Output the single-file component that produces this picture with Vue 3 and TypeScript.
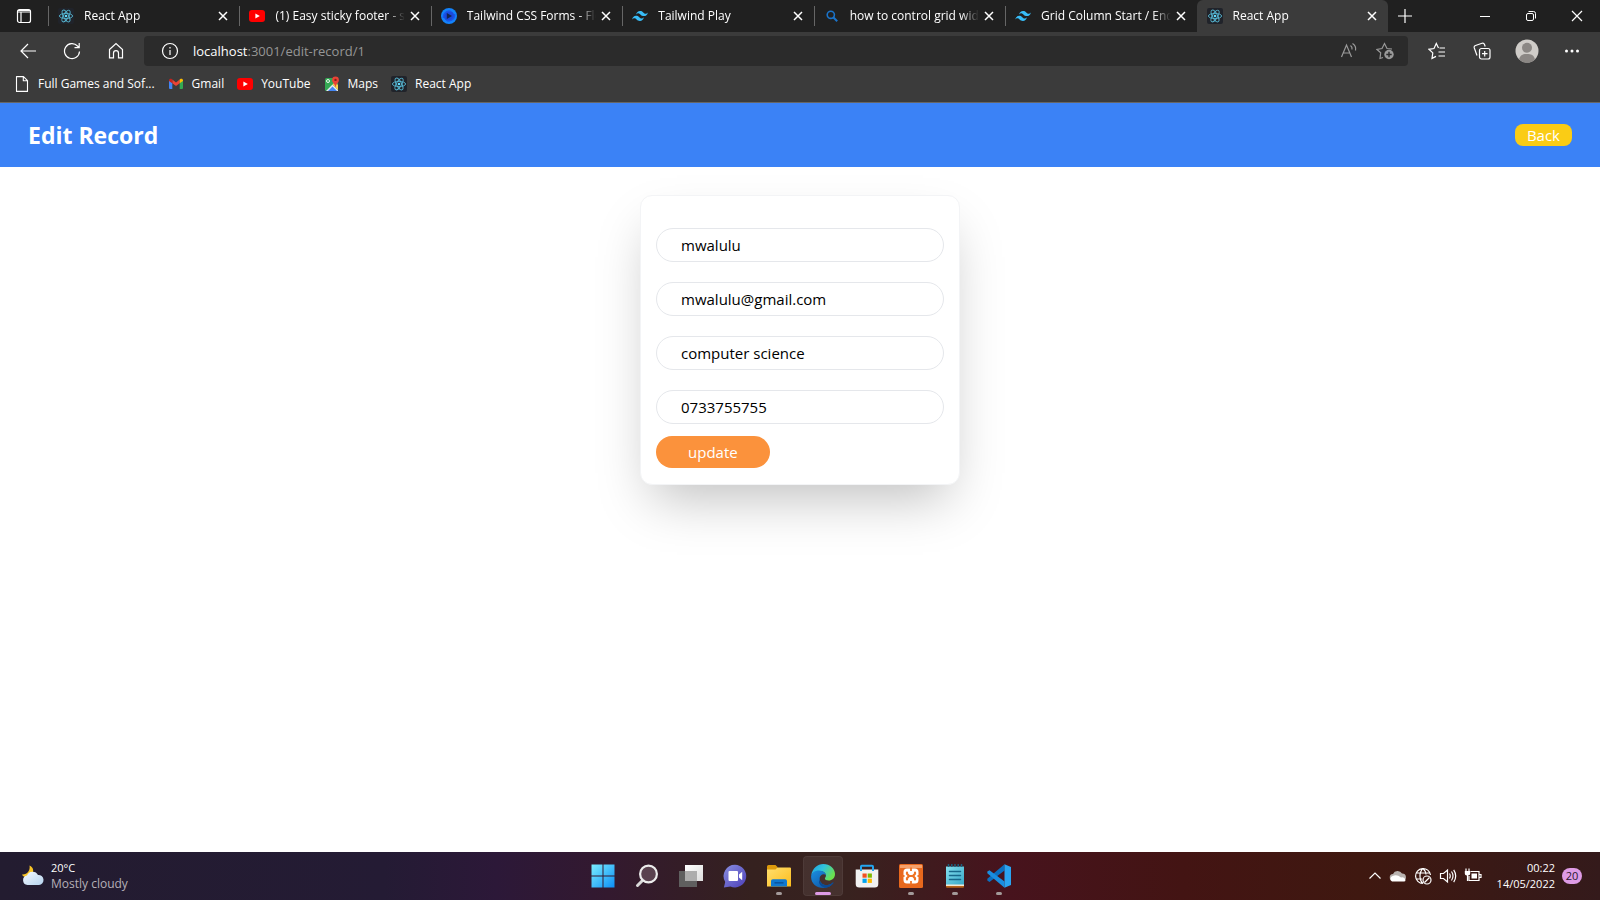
<script setup lang="ts">
import { ref } from 'vue'

interface Tab {
  title: string
  icon: string
  active?: boolean
}
interface Bookmark {
  label: string
  icon: string
}
interface TaskApp {
  label: string
  icon: string
  state?: 'running' | 'focused'
}
interface Field {
  id: string
  label: string
  type: string
  value: string
}

const tabs: Tab[] = [
  { title: 'React App', icon: 'react' },
  { title: '(1) Easy sticky footer - st', icon: 'youtube' },
  { title: 'Tailwind CSS Forms - Flo', icon: 'flowbite' },
  { title: 'Tailwind Play', icon: 'tailwind' },
  { title: 'how to control grid widt', icon: 'search' },
  { title: 'Grid Column Start / End', icon: 'tailwind' },
  { title: 'React App', icon: 'react', active: true },
]

const bookmarks: Bookmark[] = [
  { label: 'Full Games and Sof...', icon: 'file' },
  { label: 'Gmail', icon: 'gmail' },
  { label: 'YouTube', icon: 'youtube' },
  { label: 'Maps', icon: 'maps' },
  { label: 'React App', icon: 'react' },
]

const apps: TaskApp[] = [
  { label: 'Start', icon: 'start' },
  { label: 'Search', icon: 'lens' },
  { label: 'Task view', icon: 'taskview' },
  { label: 'Chat', icon: 'chat' },
  { label: 'File Explorer', icon: 'explorer', state: 'running' },
  { label: 'Microsoft Edge', icon: 'edge', state: 'focused' },
  { label: 'Microsoft Store', icon: 'store' },
  { label: 'XAMPP', icon: 'xampp', state: 'running' },
  { label: 'Notepad', icon: 'notepad', state: 'running' },
  { label: 'Visual Studio Code', icon: 'vscode', state: 'running' },
]

const fields = ref<Field[]>([
  { id: 'name', label: 'Name', type: 'text', value: 'mwalulu' },
  { id: 'email', label: 'Email', type: 'email', value: 'mwalulu@gmail.com' },
  { id: 'course', label: 'Course', type: 'text', value: 'computer science' },
  { id: 'phone', label: 'Phone', type: 'tel', value: '0733755755' },
])
</script>

<template>
  <div class="screen">
    <svg class="sprite" aria-hidden="true">
      <defs>
        <linearGradient id="g-win" gradientUnits="userSpaceOnUse" x1="0" y1="0" x2="24" y2="24">
          <stop offset="0" stop-color="#7df0ff" />
          <stop offset="1" stop-color="#0a8cf5" />
        </linearGradient>
        <linearGradient id="g-chat" x1="0" y1="0" x2="1" y2="1">
          <stop offset="0" stop-color="#8a8fe0" />
          <stop offset="1" stop-color="#4c3fb8" />
        </linearGradient>
        <linearGradient id="g-folder" x1="0" y1="0" x2="1" y2="1">
          <stop offset="0" stop-color="#ffdf6e" />
          <stop offset="1" stop-color="#fcbc1c" />
        </linearGradient>
        <linearGradient id="g-edge-top" x1="0" y1="0" x2="1" y2="0.5">
          <stop offset="0" stop-color="#1f9fe0" />
          <stop offset="0.5" stop-color="#30c4dc" />
          <stop offset="1" stop-color="#6be04e" />
        </linearGradient>
        <linearGradient id="g-edge-low" x1="0" y1="0" x2="1" y2="1">
          <stop offset="0" stop-color="#1b8fe0" />
          <stop offset="1" stop-color="#0c4c9c" />
        </linearGradient>
        <linearGradient id="g-note" x1="0" y1="0" x2="1" y2="1">
          <stop offset="0" stop-color="#86e0ef" />
          <stop offset="1" stop-color="#38a9c8" />
        </linearGradient>
        <linearGradient id="g-cloud" x1="0" y1="0" x2="1" y2="1">
          <stop offset="0" stop-color="#f5faff" />
          <stop offset="1" stop-color="#b5d3ee" />
        </linearGradient>
        <linearGradient id="g-view" x1="0" y1="0" x2="1" y2="1">
          <stop offset="0" stop-color="#ffffff" />
          <stop offset="1" stop-color="#dcdcdc" />
        </linearGradient>
      </defs>

      <symbol id="i-react" viewBox="0 0 16 16">
        <rect width="16" height="16" rx="2" fill="#20232a" />
        <g fill="none" stroke="#55b4cf" stroke-width="0.9">
          <ellipse cx="8" cy="8" rx="6.6" ry="2.6" />
          <ellipse cx="8" cy="8" rx="6.6" ry="2.6" transform="rotate(60 8 8)" />
          <ellipse cx="8" cy="8" rx="6.6" ry="2.6" transform="rotate(120 8 8)" />
        </g>
        <circle cx="8" cy="8" r="1.3" fill="#61dafb" />
      </symbol>
      <symbol id="i-youtube" viewBox="0 0 16 16">
        <rect y="2" width="16" height="12" rx="3" fill="#f00" />
        <path d="M6.4 5.4v5.2L10.8 8z" fill="#fff" />
      </symbol>
      <symbol id="i-flowbite" viewBox="0 0 16 16">
        <circle cx="8" cy="8" r="8" fill="#1383fb" />
        <circle cx="8" cy="8" r="5.2" fill="#1b49dc" />
        <path d="M2.500 10C2 5 6 2.500 10 3.500M13.500 6c.5 5-3.500 7.500-7.500 6.500" fill="none" stroke="#1a56e8" stroke-width="1.500" />
        <path d="M5.800 5v6L11 8z" fill="#13234f" />
      </symbol>
      <symbol id="i-tailwind" viewBox="0 0 16 16">
        <path d="M4 6.600Q5 3 8 3c3 0 3.400 2.300 5 2.700 1 .3 1.900-.1 2.900-1.300-.7 2.500-2 3.700-4 3.700-3 0-3.400-2.300-5-2.700-1-.3-1.900.1-2.900 1.200zM.1 11.400Q1.100 7.800 4 7.800c3 0 3.400 2.300 5 2.700 1 .3 1.900-.1 2.900-1.300-.7 2.500-2 3.700-4 3.700-3 0-3.400-2.300-5-2.700-1-.2-1.800.1-2.800 1.200z" fill="#38bdf8" />
      </symbol>
      <symbol id="i-search" viewBox="0 0 16 16">
        <g fill="none" stroke="#1a73c9" stroke-width="1.600">
          <circle cx="6.800" cy="6.800" r="3.600" />
          <path d="M9.500 9.500l3.700 3.700" stroke-width="2" />
        </g>
      </symbol>
      <symbol id="i-file" viewBox="0 0 16 16">
        <path d="M2.500.6h7l4 4v10.800h-11zM9.300.8v4h4" fill="none" stroke="#fff" stroke-width="1.100" stroke-linejoin="round" />
      </symbol>
      <symbol id="i-gmail" viewBox="0 0 16 16">
        <path d="M1 4.300l3.300 2.500V13H2a1 1 0 0 1-1-1z" fill="#4285f4" />
        <path d="M15 4.300l-3.300 2.500V13H14a1 1 0 0 0 1-1z" fill="#34a853" />
        <path d="M4.300 3.600L8 6.400l3.700-2.800v3.700L8 10 4.300 7.300z" fill="#ea4335" />
        <path d="M1 4.300c0-1.600 1.700-2 2.800-1.200l.5.500v3.700L1 4.900z" fill="#c5221f" />
        <path d="M15 4.300c0-1.600-1.700-2-2.800-1.200l-.5.500v3.700L15 4.900z" fill="#fbbc04" />
      </symbol>
      <symbol id="i-maps" viewBox="0 0 16 16">
        <rect x="1" y="2" width="13" height="13" rx="1.500" fill="#34a853" />
        <path d="M2 15l6.500-6.500L14 14v1z" fill="#e8eaed" />
        <path d="M4 15l4.500-4.500L13 15z" fill="#4285f4" />
        <path d="M8.500 8.500L11 6l3 3v5z" fill="#fbd04b" />
        <circle cx="4" cy="5" r="1.500" fill="none" stroke="#fff" stroke-width="0.900" />
        <path d="M11.500.5a3.400 3.400 0 0 1 3.400 3.400c0 2.600-2.600 3.600-3.200 7h-.4c-.6-3.400-3.200-4.400-3.200-7A3.400 3.400 0 0 1 11.500.5z" fill="#ea4335" />
        <circle cx="11.500" cy="3.900" r="1.200" fill="#8c1d18" />
      </symbol>

      <symbol id="i-start" viewBox="0 0 24 24">
        <path d="M.5.500h11v11H.5zM12.500.500h11v11h-11zM.5 12.500h11v11H.5zM12.500 12.500h11v11h-11z" fill="url(#g-win)" />
      </symbol>
      <symbol id="i-lens" viewBox="0 0 24 24">
        <path d="M8 16l-5.500 5.500" stroke="#d9d9d9" stroke-width="3" stroke-linecap="round" />
        <circle cx="13.500" cy="10" r="8.400" fill="#6b5360" fill-opacity="0.700" stroke="#ececec" stroke-width="2.200" />
      </symbol>
      <symbol id="i-taskview" viewBox="0 0 24 24">
        <rect x="6" y="1" width="18" height="16" fill="url(#g-view)" />
        <rect y="7" width="18" height="16" fill="#5f5f5f" />
        <rect x="6" y="7" width="12" height="10" fill="#adadad" />
      </symbol>
      <symbol id="i-chat" viewBox="0 0 24 24">
        <path d="M12 .8A11.300 11.300 0 1 1 7.500 22.500L.9 23.400l1.300-5.500A11.300 11.300 0 0 1 12 .8z" fill="url(#g-chat)" />
        <rect x="5.500" y="7" width="9.500" height="10" rx="1" fill="#fff" />
        <path d="M16 10.500l3.200-2.700v8.400L16 13.500z" fill="#fff" />
      </symbol>
      <symbol id="i-explorer" viewBox="0 0 24 24">
        <path d="M0 2.500A1.500 1.500 0 0 1 1.500 1h7L10.500 3v4H0z" fill="#dd9a0c" />
        <path d="M0 5.500h8.500L10.500 3.500H23a1 1 0 0 1 1 1V22.500H0z" fill="url(#g-folder)" />
        <path d="M4 22.500V17a1.800 1.800 0 0 1 1.800-1.800h12.400A1.800 1.800 0 0 1 20 17v5.500z" fill="#0f78d0" />
        <path d="M7.500 18.800h9" stroke="#0a559f" stroke-width="1.600" />
      </symbol>
      <symbol id="i-edge" viewBox="0 0 24 24">
        <path d="M.3 11C1.500 4.300 6.500 0 12.300 0 19 0 24 4.600 24 10c0 4.200-3 6.500-6.300 6.500-2.500 0-3.800-.9-3.800-2 0-.8 1.100-1.200 1.100-3 0-2-2.200-4.500-6-4.500C5 7 2 8.700.3 11z" fill="url(#g-edge-top)" />
        <path d="M.1 13C.1 9 3.600 6.500 8 6.500c4.800 0 7 3 7 5-.8-1-2-1.500-3-1.300-2.300.4-3.800 2.800-3.300 5.600.7 3.700 4.300 5.800 8 5.200 2.500-.4 4.200-1.500 5.200-2.500.4-.3.800.1.500.6C20.300 22.300 16.500 24 12.500 24 5.500 24 .1 19.500.1 13z" fill="url(#g-edge-low)" />
        <path d="M8.700 15.800c.7 3.700 4.300 5.800 8 5.200 2.500-.4 4.200-1.500 5.200-2.500.4-.3.800.1.500.6-1.500 2.200-4.200 4.200-7.200 4.700-5.500-.3-8.700-4.800-6.500-8z" fill="#0b4a94" />
      </symbol>
      <symbol id="i-store" viewBox="0 0 24 24">
        <path d="M.7 5.500h22.600V20a3.500 3.500 0 0 1-3.500 3.500H4.200A3.500 3.500 0 0 1 .7 20z" fill="#f1f1f1" />
        <path d="M6 7V2.500A1 1 0 0 1 7 1.800h10a1 1 0 0 1 1 1V7" fill="none" stroke="#24a5ee" stroke-width="2" />
        <path d="M7.500 9.500h4.200v4.200H7.500z" fill="#f25022" />
        <path d="M12.700 9.500h4.200v4.200h-4.200z" fill="#7fba00" />
        <path d="M7.500 14.700h4.200v4.200H7.500z" fill="#00a4ef" />
        <path d="M12.700 14.700h4.200v4.200h-4.200z" fill="#ffb900" />
      </symbol>
      <symbol id="i-xampp" viewBox="0 0 24 24">
        <rect width="24" height="24" rx="1.500" fill="#e8681d" />
        <rect x="1" y="1" width="22" height="3" fill="#f6a06a" />
        <path d="M8 8h2.500v2.500h3V8H16M8 16h2.500v-2.500h3V16H16M8 8v3l1.500 1L8 13v3M16 8v3l-1.500 1 1.500 1v3" fill="none" stroke="#fff" stroke-width="7" stroke-linejoin="round" stroke-linecap="round" />
        <path d="M8 8.500v1.200L10 12l-2 2.300v1.200M16 8.500v1.200L14 12l2 2.300v1.200M10 12h4" fill="none" stroke="#ef7526" stroke-width="2.200" stroke-linejoin="round" stroke-linecap="round" />
        <path d="M12 3.500v3.500M12 17v3.500M3.500 12h2M18.500 12h2" stroke="#ef7526" stroke-width="1.800" />
      </symbol>
      <symbol id="i-notepad" viewBox="0 0 24 24">
        <rect x="3" y="20" width="18" height="3.800" rx="1" fill="#b8641a" />
        <rect x="3" y="19" width="18" height="3" fill="#f2ead8" />
        <path d="M3 2.500h18v18H3z" fill="url(#g-note)" />
        <path d="M5.500 0v3M8.800 0v3M12 0v3M15.200 0v3M18.500 0v3" stroke="#1c5f7c" stroke-width="1.500" />
        <path d="M6.500 7.500h11M6.500 11.500h11M6.500 15.500h11" stroke="#17688a" stroke-width="1.500" stroke-linecap="round" />
      </symbol>
      <symbol id="i-vscode" viewBox="0 0 24 24">
        <path d="M17.500.3v6.200L2.500 18 .3 16.500v-1.700z" fill="#0a6fc0" />
        <path d="M17.500 23.700v-6.200L2.500 6.200.3 7.600v1.700z" fill="#1a8ee0" />
        <path d="M17.500.3L24 3v18l-6.500 2.700z" fill="#2aa4f0" />
      </symbol>
    </svg>

    <header class="browser">
      <div class="strip">
        <button class="tab-actions" type="button" aria-label="Tab actions">
          <svg width="16" height="16" viewBox="0 0 16 16" fill="none" stroke="#fff" stroke-width="1.200">
            <rect x="1.500" y="1.500" width="13" height="13" rx="2" />
            <path d="M1.500 4h13M2 2.500h12M5 4v10" />
          </svg>
        </button>
        <div class="tabs" role="tablist">
          <div v-for="(tab, i) in tabs" :key="i" class="tab" :class="{ active: tab.active }" role="tab" :aria-selected="!!tab.active">
            <svg class="icon"><use :href="'#i-' + tab.icon" /></svg>
            <span class="tab-title">{{ tab.title }}</span>
            <button class="tab-close" type="button" aria-label="Close tab">
              <svg width="16" height="16" viewBox="0 0 16 16" fill="none" stroke="#fff" stroke-width="1.500">
                <path d="M4 4l8 8M12 4l-8 8" />
              </svg>
            </button>
          </div>
        </div>
        <button class="new-tab" type="button" aria-label="New tab">
          <svg width="16" height="16" viewBox="0 0 16 16" fill="none" stroke="#fff" stroke-width="1.200">
            <path d="M8 1v14M1 8h14" />
          </svg>
        </button>
        <div class="window-controls">
          <button type="button" aria-label="Minimise">
            <svg width="12" height="12" viewBox="0 0 12 12" stroke="#fff"><path d="M1 6.500h10" /></svg>
          </button>
          <button type="button" aria-label="Restore">
            <svg width="12" height="12" viewBox="0 0 12 12" fill="none" stroke="#fff">
              <rect x="1.500" y="3.500" width="7" height="7" rx="1.500" />
              <path d="M3.500 1.500H8.500a2 2 0 0 1 2 2V8.500" />
            </svg>
          </button>
          <button type="button" aria-label="Close">
            <svg width="12" height="12" viewBox="0 0 12 12" stroke="#fff" stroke-width="1.200"><path d="M1 1l10 10M11 1L1 11" /></svg>
          </button>
        </div>
      </div>

      <div class="toolbar">
        <nav class="nav">
          <button type="button" aria-label="Back">
            <svg width="18" height="18" viewBox="0 0 18 18"><path d="M17 9H2M9 2L2 9l7 7" /></svg>
          </button>
          <button type="button" aria-label="Refresh">
            <svg width="18" height="18" viewBox="0 0 18 18"><path d="M16.500 9.500A7.500 7.500 0 1 1 14.500 4L16 5.500M16.200 1v4.700h-4.700" /></svg>
          </button>
          <button type="button" aria-label="Home">
            <svg width="18" height="18" viewBox="0 0 18 18"><path d="M2.500 7.500L9 1.500l6.500 6v8.300h-4v-4.600a2.500 2.500 0 0 0-5 0v4.600h-4z" /></svg>
          </button>
        </nav>
        <div class="address">
          <svg width="18" height="18" viewBox="0 0 18 18"><circle cx="9" cy="9" r="7.500" /><path d="M9 8v5M9 5v1.500" /></svg>
          <span class="url"><span class="host">localhost</span>:3001/edit-record/1</span>
          <button type="button" aria-label="Read aloud">
            <svg class="dim" width="18" height="18" viewBox="0 0 18 18"><path d="M1.500 15L6.500 3l5 12M3.300 11h6.500M10.500 3.500q2 1.500 1.500 4M12.500 1.500q4 2.500 3 7" /></svg>
          </button>
          <button type="button" aria-label="Add to favourites">
            <svg class="dim" width="18" height="18" viewBox="0 0 18 18">
              <path d="M7 15.500l-3 1 .7-5.700L1 7.500l5-1L8.500 1.500l2.500 5 5 .5" />
              <circle cx="13" cy="12.500" r="4.700" fill="#9a9a9a" stroke="none" />
              <path d="M13 9.800v5.400M10.300 12.500h5.400" stroke="#2b2b2b" stroke-width="1.400" />
            </svg>
          </button>
        </div>
        <div class="tools">
          <button type="button" aria-label="Favourites">
            <svg width="18" height="18" viewBox="0 0 18 18"><path d="M10.500 6L8.300 1.500 6 6.500l-5 .8 3.800 3.600-.8 5.500 4-2M11.500 6H17M10.500 10H17M10.500 14H17" /></svg>
          </button>
          <button type="button" aria-label="Collections">
            <svg width="18" height="18" viewBox="0 0 18 18">
              <rect x="6.500" y="6.500" width="10.500" height="10.500" rx="2" />
              <path d="M11.700 9v5.500M9 11.700h5.500M4 13.500L1.300 6a2 2 0 0 1 1.200-2.500L9 1.300A2 2 0 0 1 11.500 2.500l.7 2" />
            </svg>
          </button>
          <button type="button" aria-label="Profile">
            <svg class="avatar" width="24" height="24" viewBox="0 0 24 24">
              <circle cx="12" cy="12" r="11.500" fill="#cfccc8" />
              <circle cx="12" cy="8.800" r="5" fill="#8b8784" />
              <path d="M4 20.500c1-4.500 4-5.500 8-5.500s7 1 8 5.500a11.500 11.500 0 0 1-16 0z" fill="#8b8784" />
            </svg>
          </button>
          <button type="button" aria-label="Settings and more">
            <svg class="avatar" width="18" height="18" viewBox="0 0 18 18" fill="#fff"><circle cx="3.500" cy="9" r="1.500" /><circle cx="9" cy="9" r="1.500" /><circle cx="14.500" cy="9" r="1.500" /></svg>
          </button>
        </div>
      </div>

      <nav class="bookmarks">
        <a v-for="mark in bookmarks" :key="mark.label" href="#">
          <svg class="icon"><use :href="'#i-' + mark.icon" /></svg>
          <span>{{ mark.label }}</span>
        </a>
      </nav>
    </header>

    <main class="page">
      <div class="page-header">
        <h1>Edit Record</h1>
        <a class="back" href="#">Back</a>
      </div>
      <form class="card" @submit.prevent>
        <div class="fields">
          <input v-for="field in fields" :id="field.id" :key="field.id" v-model="field.value" :type="field.type" :aria-label="field.label" />
        </div>
        <button class="update" type="submit">update</button>
      </form>
    </main>

    <footer class="taskbar">
      <div class="weather">
        <svg width="24" height="24" viewBox="0 0 24 24">
          <path d="M9.500 1.500c4 1.500 5 6.500 2 9.500S3.500 14 2 10.500c5 .5 8.500-4 7.500-9z" fill="#f7c325" />
          <path d="M7.500 21a4.800 4.800 0 0 1-.5-9.500 6 6 0 0 1 11-.5 5 5 0 0 1 1 10z" fill="url(#g-cloud)" />
        </svg>
        <div>
          <div>20°C</div>
          <div class="muted">Mostly cloudy</div>
        </div>
      </div>
      <div class="apps">
        <button v-for="app in apps" :key="app.label" type="button" class="app" :class="app.state" :aria-label="app.label">
          <svg width="24" height="24"><use :href="'#i-' + app.icon" /></svg>
        </button>
      </div>
      <div class="tray">
        <svg width="14" height="16" viewBox="0 0 14 16"><path d="M1.500 10.500L7 5l5.500 5.500" /></svg>
        <svg width="18" height="16" viewBox="0 0 18 16">
          <path d="M4.500 13a3.500 3.500 0 0 1-.5-7 5 5 0 0 1 9-.5 3.800 3.800 0 0 1 1 7.500z" fill="#b9b3b0" stroke="none" />
          <path d="M3 13.500a3 3 0 0 1 .5-5.500Q8 6 12 9.500q3.500-1 4.500 2.500a1.500 1.500 0 0 1-1.500 1.500z" fill="#fff" stroke="none" />
        </svg>
        <svg width="18" height="18" viewBox="0 0 18 18">
          <path d="M9 16.500A7.500 7.500 0 1 1 16.500 8M9 1.500c-4 3.500-4 11.500 0 15M9 1.500c2 1.800 3 4 3 6M2 6h14M2 12h6" />
          <circle cx="13" cy="13" r="4" />
          <path d="M10.500 15.500l5-5" />
        </svg>
        <svg width="18" height="18" viewBox="0 0 18 18"><path d="M1.500 6.500h3L8.500 3v12l-4-3.500h-3zM10.500 6.500q1.500 2.500 0 5M12.500 4.500q3 4.500 0 9M14.700 2.800q4 6.200 0 12.400" /></svg>
        <svg width="18" height="18" viewBox="0 0 18 18">
          <path d="M6.500 4.500H15v9H5V9M15.500 7.500h1.500v3h-1.500M2 1.500v3M5 1.500v3M3.500 8v6" />
          <path d="M.8 4h5.400v2.500a2 2 0 0 1-2 2H2.800a2 2 0 0 1-2-2zM7.500 6.500h5.500v5H7.500z" fill="#fff" stroke="none" />
        </svg>
        <div class="clock">
          <div>00:22</div>
          <div>14/05/2022</div>
        </div>
        <span class="badge">20</span>
      </div>
    </footer>
  </div>
</template>

<style>
body {
  margin: 0;
}
</style>

<style scoped>
.screen {
  display: flex;
  flex-direction: column;
  min-height: 100vh;
  background: #fff;
  font-family: "Open Sans", "Noto Sans", sans-serif;
}
.screen *,
.screen *::before,
.screen *::after {
  box-sizing: border-box;
}
.sprite {
  position: absolute;
  width: 0;
  height: 0;
}
button {
  display: flex;
  align-items: center;
  justify-content: center;
  padding: 0;
  border: 0;
  background: none;
  color: inherit;
  font: inherit;
}
a {
  color: inherit;
  text-decoration: none;
}
svg {
  display: block;
  flex: none;
}
.icon {
  width: 16px;
  height: 16px;
}

.browser {
  background: #3b3b3b;
  border-bottom: 1px solid #666;
  color: #fff;
  font-size: 12px;
  line-height: 16px;
}
.strip {
  display: flex;
  height: 32px;
  background: #202020;
}
.tab-actions {
  flex: 0 0 48px;
}
.tabs {
  display: flex;
  flex: 0 1 1340px;
  min-width: 0;
}
.tab {
  display: flex;
  flex: 1 1 0;
  align-items: center;
  gap: 10px;
  min-width: 0;
  padding: 0 8px 0 10px;
  background: linear-gradient(#666, #666) left / 1px 20px no-repeat;
}
.tab.active {
  border-radius: 6px 6px 0 0;
  background: #3b3b3b;
}
.tab-title {
  flex: 1;
  min-width: 0;
  margin-right: -8px;
  overflow: hidden;
  white-space: nowrap;
  mask-image: linear-gradient(to right, #000 calc(100% - 18px), transparent);
}
.new-tab {
  flex: 0 0 34px;
}
.window-controls {
  display: flex;
  margin-left: auto;
}
.window-controls button {
  width: 46px;
}

.toolbar {
  display: flex;
  align-items: center;
  height: 38px;
  padding-right: 6px;
}
.nav {
  display: flex;
  padding: 0 6px;
}
.nav button,
.tools button {
  width: 44px;
  height: 30px;
}
.tools button {
  width: 45px;
}
.tools {
  display: flex;
  padding-left: 6px;
}
.toolbar svg,
.tray svg {
  fill: none;
  stroke: #fff;
  stroke-width: 1.2;
}
.toolbar svg.dim {
  stroke: #9a9a9a;
}
.toolbar svg.avatar {
  fill: #fff;
  stroke: none;
}
.address {
  display: flex;
  flex: 1;
  align-items: center;
  gap: 18px;
  height: 30px;
  padding: 0 14px 0 17px;
  border-radius: 4px;
  background: #2b2b2b;
  font-size: 13px;
}
.url {
  flex: 1;
  margin-left: -4px;
  color: #969696;
}
.host {
  color: #fff;
}
.bookmarks {
  display: flex;
  align-items: center;
  gap: 13px;
  height: 32px;
  padding: 0 14px 4px;
}
.bookmarks a {
  display: flex;
  gap: 8px;
}

.page {
  display: flex;
  flex: 1;
  flex-direction: column;
  align-items: center;
}
.page-header {
  display: flex;
  align-items: center;
  justify-content: space-between;
  align-self: stretch;
  height: 64px;
  padding: 0 28px;
  background: #3b82f6;
  color: #fff;
}
h1 {
  margin: 0;
  font-size: 23px;
  line-height: 32px;
}
.back {
  padding: 0 12px;
  border-radius: 8px;
  background: #facc15;
  font-size: 15px;
  line-height: 22px;
}
.card {
  width: 320px;
  margin-top: 28px;
  padding: 32px 15px 16px;
  border: 1px solid #f3f4f6;
  border-radius: 12px;
  background: #fff;
  box-shadow: 0 25px 50px -12px rgba(0, 0, 0, 0.25);
  font-size: 15px;
}
.fields {
  display: grid;
  gap: 20px;
}
input {
  width: 100%;
  height: 34px;
  margin: 0;
  padding: 0 24px;
  border: 1px solid #e5e7eb;
  border-radius: 17px;
  outline: none;
  background: #fff;
  color: #000;
  font: inherit;
}
.update {
  height: 32px;
  margin-top: 12px;
  padding: 0 32px;
  border-radius: 16px;
  background: #fb923c;
  color: #fff;
}

.taskbar {
  display: grid;
  grid-template-columns: 1fr auto 1fr;
  align-items: center;
  height: 48px;
  padding: 0 18px 0 20px;
  background: linear-gradient(to right, #231c30 0%, #241b34 24%, #2c1838 31%, #33192f 38%, #35211f 47%, #38221f 53%, #47131d 63%, #431413 74%, #3f1810 85%, #341a1b 100%);
  color: #fff;
  font-size: 11px;
  line-height: 16px;
}
.weather,
.tray {
  display: flex;
  align-items: center;
}
.weather {
  gap: 7px;
}
.muted {
  color: #b5b0b8;
  font-size: 12px;
}
.apps {
  display: flex;
  gap: 4px;
}
.app {
  position: relative;
  width: 40px;
  height: 40px;
  border-radius: 4px;
}
.app.focused {
  background: rgba(255, 255, 255, 0.07);
  box-shadow: inset 0 0 0 1px rgba(255, 255, 255, 0.05);
}
.app.running::after,
.app.focused::after {
  position: absolute;
  bottom: 1px;
  left: 50%;
  width: 6px;
  height: 3px;
  border-radius: 2px;
  background: #a39a9a;
  transform: translateX(-50%);
  content: "";
}
.app.focused::after {
  width: 16px;
  background: #de9be5;
}
.tray {
  justify-content: flex-end;
  gap: 7px;
}
.clock {
  margin-left: 8px;
  text-align: right;
}
.badge {
  width: 20px;
  height: 16px;
  border-radius: 8px;
  background: #de9be5;
  color: #2b1630;
  text-align: center;
}
</style>
